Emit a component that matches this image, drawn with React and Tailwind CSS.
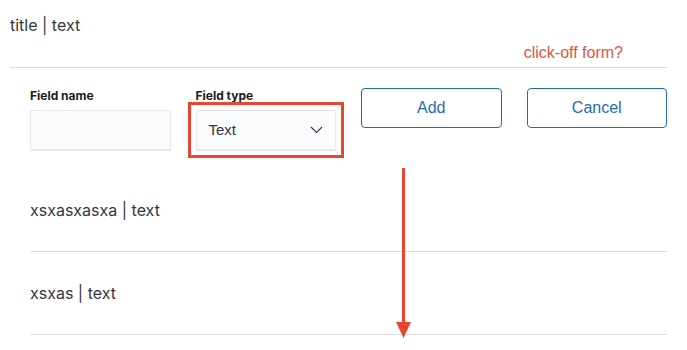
import React from 'react';

const rows = [
  { id: 1, name: 'xsxasxasxa', type: 'text' },
  { id: 2, name: 'xsxas', type: 'text' },
];

const App = () => {
  return (
    <div className="relative w-[687px] h-[350px] overflow-hidden bg-white font-['Inter',sans-serif] text-[#343741]">
      {/* header */}
      <div className="ml-[10px] mr-[20px] h-[68px] flex justify-between border-b border-[#dcdcdc]">
        <div className="pt-[14px] text-[16px] leading-[22px]">title | text</div>
        <div className="self-end mb-[4px] mr-[44px] font-['Liberation_Sans',sans-serif] text-[16px] leading-[20px] text-[#e2533e]">
          click-off form?
        </div>
      </div>

      {/* form */}
      <div className="mt-[20px] ml-[30px] mr-[20px] grid grid-cols-4 gap-x-[25px] items-start">
        <div>
          <div className="text-[12px] leading-[15px] font-bold text-[#1a1c21] mb-[7px]">Field name</div>
          <div className="h-[40px] bg-[#fafbfd] border border-[#e6e9ef] shadow-[0_1px_1px_rgba(0,0,0,0.08)]" />
        </div>
        <div>
          <div className="text-[12px] leading-[15px] font-bold text-[#1a1c21] mb-[7px]">Field type</div>
          <div className="h-[40px] flex items-center justify-between pl-[12px] pr-[12px] bg-[#fafbfd] border border-[#e6e9ef] shadow-[0_1px_1px_rgba(0,0,0,0.08)] outline-[3px] outline-solid outline-[#e8462f] outline-offset-[5px]">
            <span className="font-['Liberation_Sans',sans-serif] text-[15px] text-[#343741]">Text</span>
            <svg width="13" height="8" viewBox="0 0 13 8" fill="none">
              <path d="M1 1l5.5 5.5L12 1" stroke="#343741" strokeWidth="1.1" />
            </svg>
          </div>
        </div>
        <button className="h-[40px] rounded-[4px] border border-[#1f6bb5] font-['Liberation_Sans',sans-serif] text-[#1f6bb5] text-[16px]">Add</button>
        <button className="h-[40px] rounded-[4px] border border-[#1f6bb5] font-['Liberation_Sans',sans-serif] text-[#1f6bb5] text-[16px]">Cancel</button>
      </div>

      {/* list */}
      <div className="mt-[19px] ml-[30px] mr-[20px]">
        {rows.map((r) => (
          <div key={r.id} className="h-[83px] flex items-center border-b border-[#dcdcdc] text-[16px]">
            {r.name} | {r.type}
          </div>
        ))}
      </div>

      {/* arrow annotation */}
      <svg className="absolute left-[395px] top-[168px]" width="17" height="170" viewBox="0 0 17 170">
        <rect x="7" y="0" width="3" height="156" fill="#e8462f" />
        <path d="M1 154h15l-7.5 16z" fill="#e8462f" />
      </svg>
    </div>
  );
};

export default App;
